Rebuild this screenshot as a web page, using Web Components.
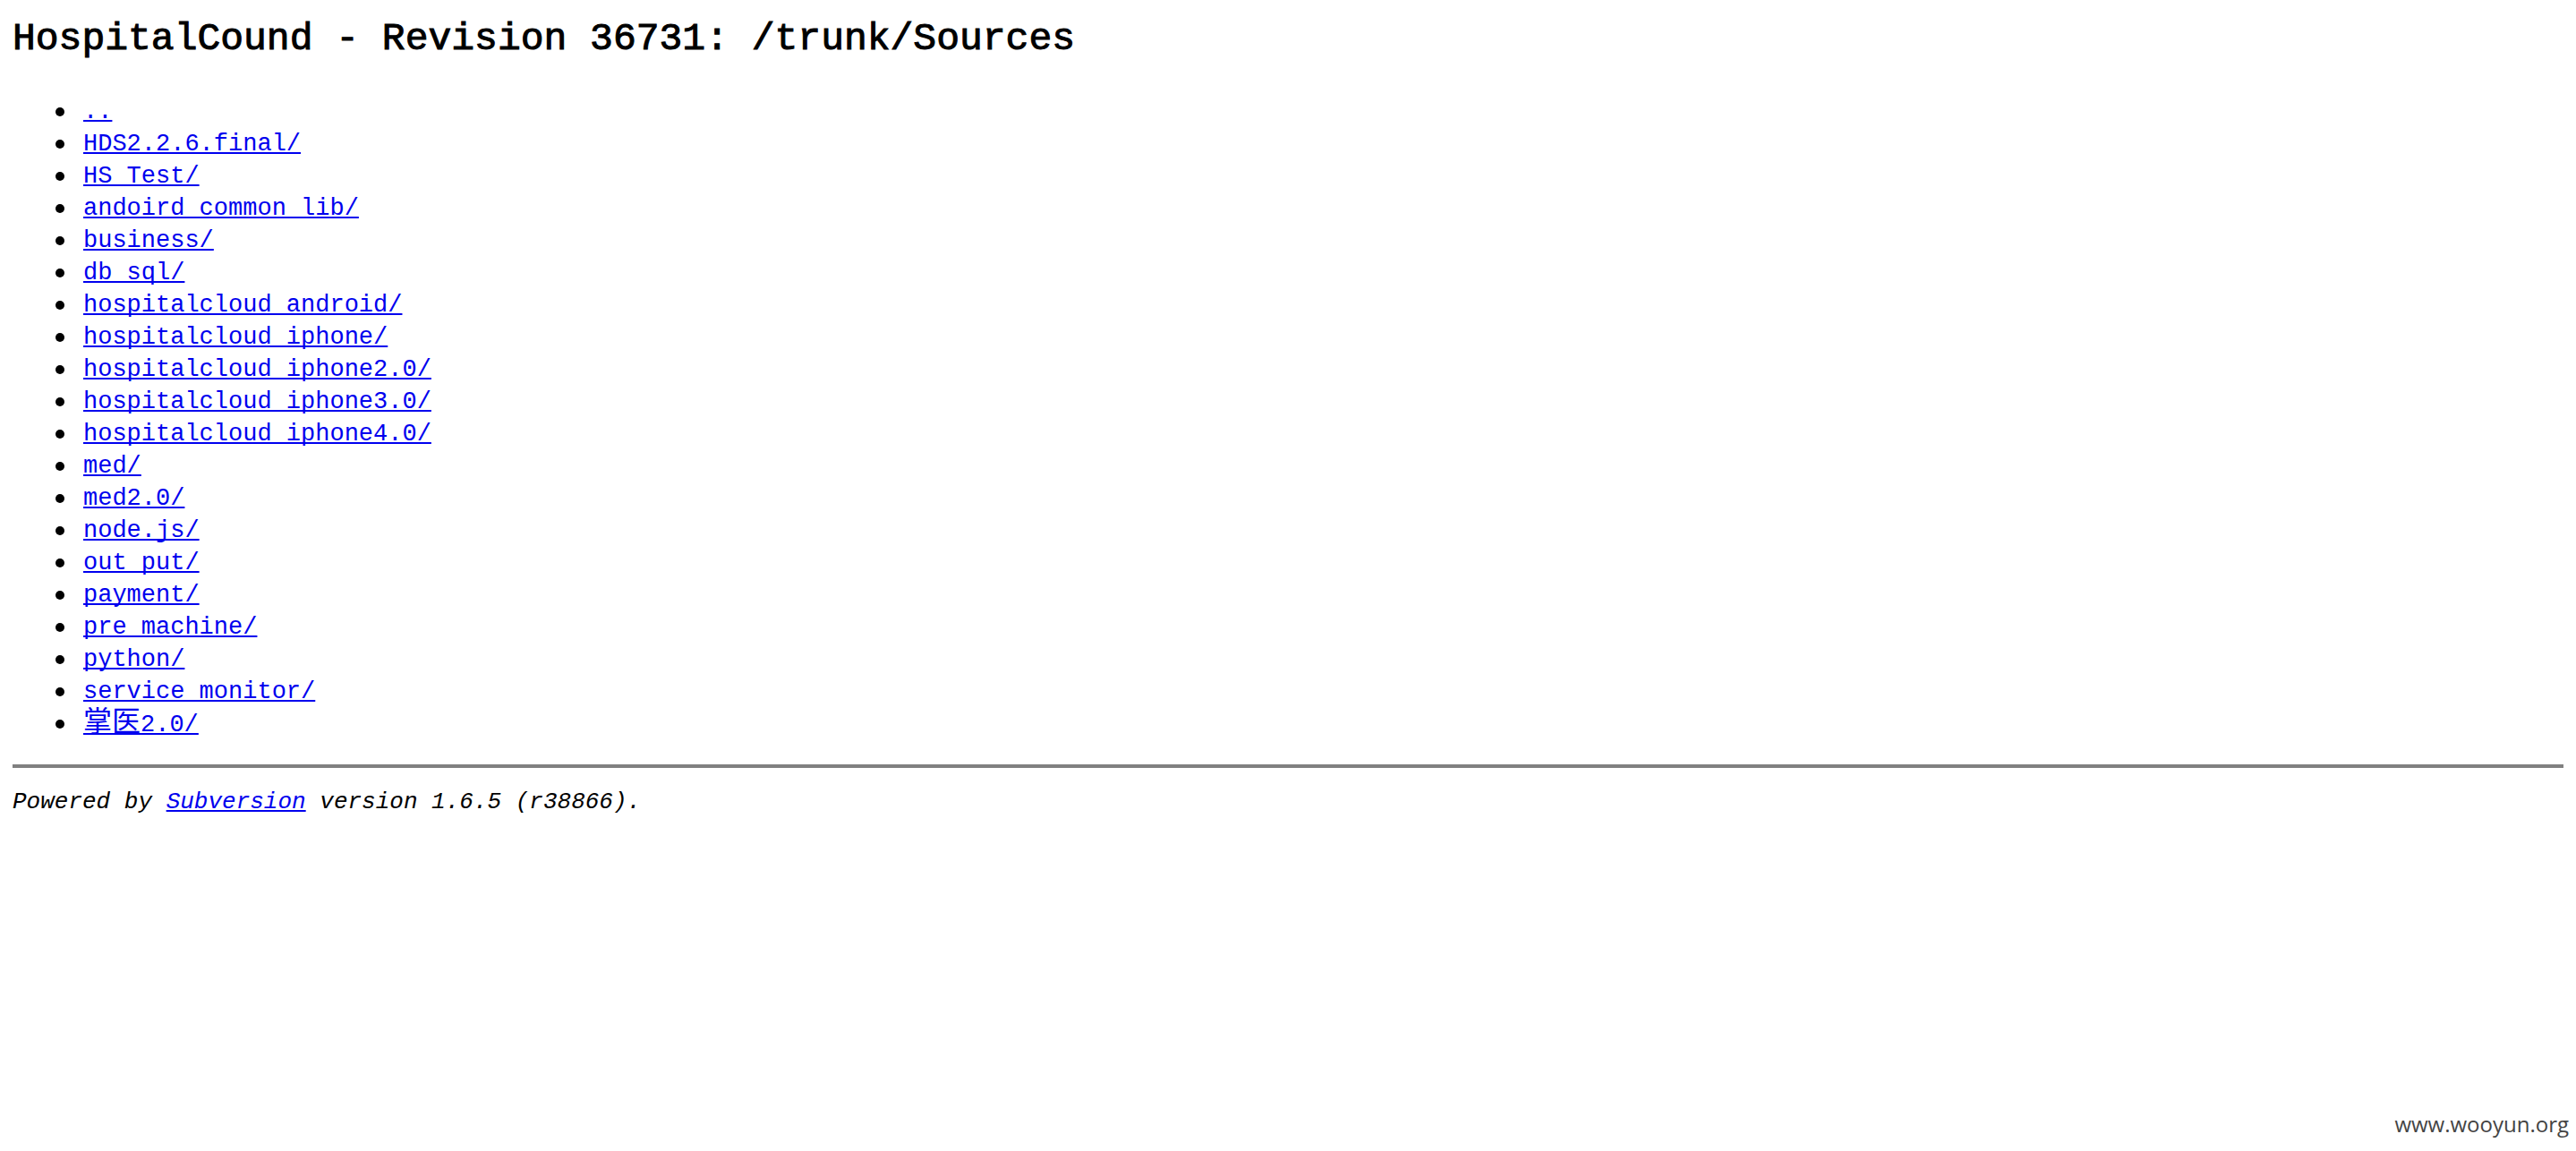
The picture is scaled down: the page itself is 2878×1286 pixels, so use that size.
<!DOCTYPE html>
<html lang="en">
<head>
<meta charset="utf-8">
<title>HospitalCound - Revision 36731: /trunk/Sources</title>
<style>
  body { margin: 0; background: #fff; color: #000; }
</style>
</head>
<body>
<svn-page>
  <svn-listing heading="HospitalCound - Revision 36731: /trunk/Sources">
    <svn-entry href="../">..</svn-entry>
    <svn-entry>HDS2.2.6.final/</svn-entry>
    <svn-entry>HS_Test/</svn-entry>
    <svn-entry>andoird_common_lib/</svn-entry>
    <svn-entry>business/</svn-entry>
    <svn-entry>db_sql/</svn-entry>
    <svn-entry>hospitalcloud_android/</svn-entry>
    <svn-entry>hospitalcloud_iphone/</svn-entry>
    <svn-entry>hospitalcloud_iphone2.0/</svn-entry>
    <svn-entry>hospitalcloud_iphone3.0/</svn-entry>
    <svn-entry>hospitalcloud_iphone4.0/</svn-entry>
    <svn-entry>med/</svn-entry>
    <svn-entry>med2.0/</svn-entry>
    <svn-entry>node.js/</svn-entry>
    <svn-entry>out_put/</svn-entry>
    <svn-entry>payment/</svn-entry>
    <svn-entry>pre_machine/</svn-entry>
    <svn-entry>python/</svn-entry>
    <svn-entry>service_monitor/</svn-entry>
    <svn-entry><span lang="zh" style="font-size:32px">掌医</span>2.0/</svn-entry>
  </svn-listing>
  <svn-footer version="1.6.5 (r38866)"></svn-footer>
  <site-mark slot="mark">www.wooyun.org</site-mark>
</svn-page>
<script>
const linkStyle = `
  a {
    color: #0000ee;
    text-decoration: underline 2px;
    text-underline-offset: 2px;
    text-decoration-skip-ink: none;
  }`;

class SvnPage extends HTMLElement {
  constructor() {
    super();
    this.attachShadow({ mode: 'open' }).innerHTML = `
      <style>
        :host {
          display: flex;
          flex-direction: column;
          justify-content: space-between;
          box-sizing: border-box;
          min-height: 100vh;
          padding: 14px;
          font: 27px/36px "Liberation Mono", "Noto Sans CJK SC", monospace;
        }
      </style>
      <main><slot></slot></main>
      <slot name="mark"></slot>`;
  }
}

class SvnListing extends HTMLElement {
  constructor() {
    super();
    this.attachShadow({ mode: 'open' }).innerHTML = `
      <style>
        :host { display: block; }
        h1 { margin: 0 0 33px; font-size: 43px; line-height: 60px; font-weight: 400; -webkit-text-stroke: 1px; }
        div { display: flex; flex-direction: column; padding-left: 48px; }
      </style>
      <h1></h1>
      <div role="list"><slot></slot></div>`;
  }
  connectedCallback() {
    this.shadowRoot.querySelector('h1').textContent = this.getAttribute('heading');
  }
}

class SvnEntry extends HTMLElement {
  constructor() {
    super();
    this.attachShadow({ mode: 'open' }).innerHTML = `
      <style>
        :host { display: flex; align-items: center; gap: 21px; height: 36px; }
        :host::before {
          content: "";
          width: 10px;
          height: 10px;
          border-radius: 50%;
          background: #000;
        }
        ${linkStyle}
      </style>
      <a><slot></slot></a>`;
  }
  connectedCallback() {
    this.setAttribute('role', 'listitem');
    this.shadowRoot.querySelector('a').href = this.getAttribute('href') || '#';
  }
}

class SvnFooter extends HTMLElement {
  constructor() {
    super();
    this.attachShadow({ mode: 'open' }).innerHTML = `
      <style>
        :host { display: block; }
        hr { height: 4px; margin: 27px 0 20px; border: 0; background: #808080; }
        p { margin: 0; font-size: 26px; font-style: italic; }
        ${linkStyle}
      </style>
      <hr>
      <p>Powered by <a href="#">Subversion</a> version <span></span>.</p>`;
  }
  connectedCallback() {
    this.shadowRoot.querySelector('span').textContent = this.getAttribute('version');
  }
}

class SiteMark extends HTMLElement {
  constructor() {
    super();
    this.attachShadow({ mode: 'open' }).innerHTML = `
      <style>
        :host {
          display: block;
          align-self: flex-end;
          margin-right: -6px;
          font: 24px/32px "Open Sans", sans-serif;
          color: #444;
        }
      </style>
      <slot></slot>`;
  }
}

customElements.define('svn-page', SvnPage);
customElements.define('svn-listing', SvnListing);
customElements.define('svn-entry', SvnEntry);
customElements.define('svn-footer', SvnFooter);
customElements.define('site-mark', SiteMark);
</script>
</body>
</html>
